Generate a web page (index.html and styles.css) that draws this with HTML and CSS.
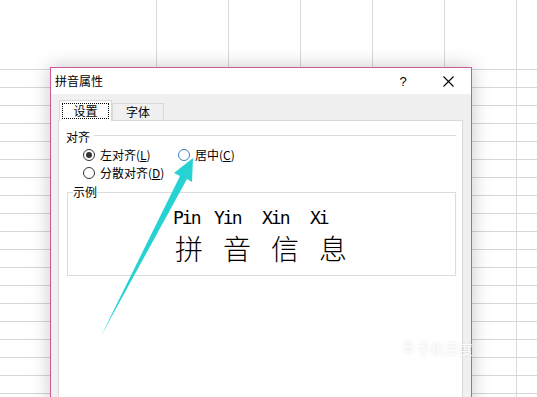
FILE: index.html
```html
<!DOCTYPE html>
<html lang="zh-CN">
<head>
    <meta charset="UTF-8">
    <title>拼音属性</title>
    <link rel="stylesheet" href="styles.css">
</head>
<body>
    <div class="sheet">
        <div class="rows"></div>

        <div class="dialog">
            <div class="titlebar">
                <span class="title">拼音属性</span>
                <span class="help">?</span>
                <span class="close">
                    <svg width="11" height="11" viewBox="0 0 11 11"><path d="M0.5 0.5 L10.5 10.5 M10.5 0.5 L0.5 10.5" stroke="#000" stroke-width="1.1" fill="none"/></svg>
                </span>
            </div>
            <div class="body">
                <div class="tabs">
                    <div class="tab active"><span class="focus">设置</span></div>
                    <div class="tab">字体</div>
                </div>
                <div class="panel">
                    <div class="group-head">
                        <span>对齐</span>
                        <span class="rule"></span>
                    </div>
                    <div class="radios">
                        <label class="radio"><span class="dot checked"></span><span>左对齐(<u>L</u>)</span></label>
                        <label class="radio"><span class="dot hover"></span><span>居中(<u>C</u>)</span></label>
                        <label class="radio"><span class="dot"></span><span>分散对齐(<u>D</u>)</span></label>
                    </div>
                    <fieldset class="sample">
                        <legend>示例</legend>
                        <div class="sample-text">
                            <div class="pinyin">
                                <span class="w41">Pin</span>
                                <span class="w48">Yin</span>
                                <span class="w48">Xin</span>
                                <span>Xi</span>
                            </div>
                            <div class="hanzi">拼音信息</div>
                        </div>
                    </fieldset>
                </div>
            </div>
        </div>

        <svg class="arrow" width="537" height="397" viewBox="0 0 537 397">
            <polygon points="193,158 174,173 180,176 101,336 187,179 192,182" fill="#27d2d3"/>
        </svg>

        <div class="watermark"><span class="logo">S</span>手机百度</div>
    </div>
</body>
</html>
```

FILE: styles.css
```css
body {
    margin: 0;
    background: #fff;
    font-family: "Noto Sans CJK SC", "Liberation Sans", sans-serif;
    font-size: 12px;
    color: #000;
}
.sheet {
    position: relative;
    width: 537px;
    height: 397px;
    overflow: hidden;
    background-image:
        linear-gradient(to right, #fff 0 150px, transparent 150px),
        linear-gradient(to right, #d9d9d9 1px, transparent 1px);
    background-size: 100% 100%, 72px 100%;
    background-position: 0 0, 156px 0;
    background-repeat: no-repeat, repeat-x;
}
.rows {
    margin-top: 69px;
    height: 328px;
    background-image: linear-gradient(#d6d6d6 1px, transparent 1px);
    background-size: 100% 18px;
}

/* окно диалога */
.dialog {
    position: absolute;
    left: 50px;
    top: 67px;
    width: 420px;
    height: 340px;
    border: 1px solid #d0579a;
    background: #f0f0f0;
    box-shadow: 0 0 18px rgba(0,0,0,0.22);
}
.titlebar {
    display: flex;
    align-items: center;
    height: 26px;
    background: #fff;
    padding-left: 4px;
}
.title {
    flex: 1;
    line-height: 16px;
}
.help {
    width: 44px;
    text-align: center;
    font-family: "Liberation Sans", sans-serif;
    font-size: 13px;
}
.close {
    width: 46px;
    display: flex;
    justify-content: center;
}
.body {
    padding: 6px 8px 0 7px;
}
.tabs {
    display: flex;
    align-items: flex-end;
    margin-left: 1px;
    height: 20px;
    position: relative;
    z-index: 1;
}
.tab {
    box-sizing: border-box;
    width: 52px;
    height: 17px;
    border: 1px solid #d9d9d9;
    border-bottom: none;
    background: #f0f0f0;
    text-align: center;
    line-height: 16px;
}
.tab.active {
    width: 53px;
    height: 21px;
    background: #fff;
    margin-bottom: -1px;
    padding: 2px 2px 0;
}
.focus {
    display: block;
    border: 1px dotted #000;
    line-height: 14px;
}
.panel {
    height: 300px;
    background: #fff;
    border: 1px solid #d9d9d9;
    padding: 8px 6px 0 7px;
}
.group-head {
    display: flex;
    align-items: center;
    gap: 4px;
    line-height: 16px;
}
.rule {
    flex: 1;
    border-top: 1px solid #dcdcdc;
    margin-top: -3px;
}
.radios {
    display: grid;
    grid-template-columns: 95px auto;
    grid-auto-rows: 18px;
    padding: 1px 0 0 17px;
}
.radio {
    display: flex;
    align-items: center;
    gap: 5px;
    line-height: 16px;
}
.radio u {
    text-underline-offset: 1px;
}
.dot {
    box-sizing: border-box;
    width: 12px;
    height: 12px;
    border: 1px solid #333;
    border-radius: 50%;
    background: #fff;
    position: relative;
}
.dot.checked::after {
    content: "";
    position: absolute;
    left: 2px;
    top: 2px;
    width: 6px;
    height: 6px;
    border-radius: 50%;
    background: #333;
}
.dot.hover {
    border-color: #3d7fc1;
}
.sample {
    margin: 2px 0 0 1px;
    padding: 0 0 12px;
    border: 1px solid #dcdcdc;
    min-width: 0;
}
.sample legend {
    padding: 0;
    margin-left: 5px;
    line-height: 16px;
}
.sample-text {
    padding-left: 105px;
}
.pinyin {
    display: flex;
    font-family: "DejaVu Sans Mono", "Liberation Mono", monospace;
    font-size: 18px;
    letter-spacing: -2px;
    line-height: 18px;
    padding-top: 9px;
}
.w41 { width: 41px; }
.w48 { width: 48px; }
.hanzi {
    font-size: 28px;
    line-height: 30px;
    letter-spacing: 20px;
    margin: 6px 0 0 2px;
    font-weight: 300;
}

/* стрелка и водяной знак поверх */
.arrow {
    position: absolute;
    left: 0;
    top: 0;
}
.watermark {
    position: absolute;
    left: 403px;
    top: 338px;
    font-size: 14px;
    color: rgba(255,255,255,0.9);
    text-shadow: 0 0 3px rgba(0,0,0,0.12);
    display: flex;
    align-items: center;
    gap: 3px;
}
.logo {
    font-family: "Liberation Sans", sans-serif;
    font-weight: bold;
    font-size: 16px;
}
```
